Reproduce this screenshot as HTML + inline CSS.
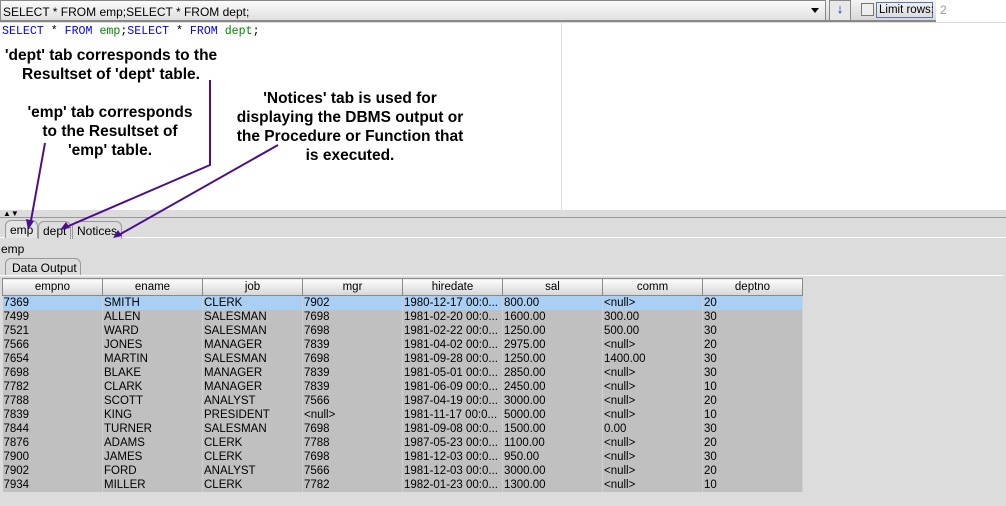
<!DOCTYPE html>
<html><head><style>
*{margin:0;padding:0;box-sizing:border-box}
body{width:1006px;height:506px;overflow:hidden;background:#dcdcdc;font-family:"Liberation Sans",Arial,sans-serif;font-size:11px;position:relative;color:#000}
.abs{position:absolute;white-space:nowrap}
.top{left:0;top:0;width:1006px;height:22px;background:linear-gradient(#f4f4f4,#d8d8d8);border-bottom:2px solid #888}
.combo{left:0;top:0;width:826px;height:21px;border:1px solid #888;background:linear-gradient(#fbfbfb,#e0e0e0);padding:4px 2px;font-size:12px}
.ed{left:0;top:23px;width:1006px;height:187px;background:#fff}
.code{font-family:"Liberation Mono",monospace;font-size:11.6px;left:2px;top:25px}
.ann{font-family:"Liberation Sans",Arial,sans-serif;font-weight:bold;font-size:15.5px;line-height:19px;text-align:center}
.tab{height:18px;border:1px solid #999;border-bottom:none;border-radius:6px 6px 0 0;padding:2px 4px;font-size:12px;background:#dcdcdc}
table{border-collapse:collapse;position:absolute;left:2px;top:278px;table-layout:fixed;width:800px}
td{width:100px;height:14px;padding:0 1px;font-size:11.5px;line-height:14px;white-space:nowrap;overflow:hidden;border-right:1px solid #d0d0d0}
th{width:100px;height:17px;font-weight:normal;font-size:11.5px;background:linear-gradient(#fdfdfd,#d6d6d6);border:1px solid #8a8a8a}
tr.r td{background:#c0c0c0}
tr.s td{background:#a9cff5}
</style></head><body>
<div class="abs top"></div>
<div class="abs combo">SELECT * FROM emp;SELECT * FROM dept;<span style="position:absolute;right:6px;top:7px;border:4px solid transparent;border-top:5px solid #000"></span></div>
<div class="abs" style="left:829px;top:0;width:22px;height:21px;border:1px solid #888;background:#e8e8e8;color:#0020d0;text-align:center;font-weight:bold;font-size:13px">&#8595;</div>
<div class="abs" style="left:861px;top:3px;width:13px;height:13px;border:1px solid #777;background:#eee"></div>
<div class="abs" style="left:876px;top:2px;width:57px;height:16px;border:1px solid #5577aa;padding:1px 2px;font-size:11.5px;line-height:12px">Limit rows:</div>
<div class="abs" style="left:936px;top:0;width:70px;height:22px;background:#fff;color:#999;padding:3px 4px;font-size:12px">2</div>
<div class="abs ed"></div>
<div class="abs" style="left:561px;top:23px;width:1px;height:187px;background:#ddd"></div>
<div class="abs code"><span style="color:#00f">SELECT</span> * <span style="color:#00f">FROM</span> <span style="color:#080">emp</span>;<span style="color:#00f">SELECT</span> * <span style="color:#00f">FROM</span> <span style="color:#080">dept</span>;</div>
<div class="abs ann" style="left:0;top:46px;width:222px">'dept' tab corresponds to the<br>Resultset of 'dept' table.</div>
<div class="abs ann" style="left:10px;top:103px;width:200px">'emp' tab corresponds<br>to the Resultset of<br>'emp' table.</div>
<div class="abs ann" style="left:225px;top:89px;width:250px">'Notices' tab is used for<br>displaying the DBMS output or<br>the Procedure or Function that<br>is executed.</div>
<div class="abs" style="left:0;top:210px;width:1006px;height:8px;background:#dcdcdc;border-bottom:1px solid #999"></div>
<div class="abs" style="left:3px;top:211px;font-size:8px;line-height:6px">&#9650;&#9660;</div>
<div class="abs" style="left:0;top:237px;width:1006px;height:1px;background:#fff"></div>
<div class="abs tab" style="left:5px;top:220px;height:18px;background:#e4e4e4">emp</div>
<div class="abs tab" style="left:38px;top:221px">dept</div>
<div class="abs tab" style="left:72px;top:221px">Notices</div>
<div class="abs" style="left:1px;top:242px;font-size:12px">emp</div>
<div class="abs tab" style="left:5px;top:258px;width:76px;height:17px;padding:2px 6px">Data Output</div>
<div class="abs" style="left:0;top:275px;width:1003px;height:1px;background:#fff"></div>
<svg class="abs" style="left:0;top:0" width="1006" height="506">
<g stroke="#4b0e8f" stroke-width="2" fill="none"><path d="M45 143 L30 226"/><path d="M210 80 L210 165 L64 228"/><path d="M278 145 L117 236"/></g>
<g fill="#4b0e8f"><path d="M28 230 L26 219 L34 221Z"/><path d="M60 230 L66 222 L70 228Z"/><path d="M113 238 L118 230 L122 236Z"/></g>
</svg>
<table>
<tr><th>empno</th><th>ename</th><th>job</th><th>mgr</th><th>hiredate</th><th>sal</th><th>comm</th><th>deptno</th></tr>
<tr class="s"><td>7369</td><td>SMITH</td><td>CLERK</td><td>7902</td><td>1980-12-17 00:0...</td><td>800.00</td><td>&lt;null&gt;</td><td>20</td></tr>
<tr class="r"><td>7499</td><td>ALLEN</td><td>SALESMAN</td><td>7698</td><td>1981-02-20 00:0...</td><td>1600.00</td><td>300.00</td><td>30</td></tr>
<tr class="r"><td>7521</td><td>WARD</td><td>SALESMAN</td><td>7698</td><td>1981-02-22 00:0...</td><td>1250.00</td><td>500.00</td><td>30</td></tr>
<tr class="r"><td>7566</td><td>JONES</td><td>MANAGER</td><td>7839</td><td>1981-04-02 00:0...</td><td>2975.00</td><td>&lt;null&gt;</td><td>20</td></tr>
<tr class="r"><td>7654</td><td>MARTIN</td><td>SALESMAN</td><td>7698</td><td>1981-09-28 00:0...</td><td>1250.00</td><td>1400.00</td><td>30</td></tr>
<tr class="r"><td>7698</td><td>BLAKE</td><td>MANAGER</td><td>7839</td><td>1981-05-01 00:0...</td><td>2850.00</td><td>&lt;null&gt;</td><td>30</td></tr>
<tr class="r"><td>7782</td><td>CLARK</td><td>MANAGER</td><td>7839</td><td>1981-06-09 00:0...</td><td>2450.00</td><td>&lt;null&gt;</td><td>10</td></tr>
<tr class="r"><td>7788</td><td>SCOTT</td><td>ANALYST</td><td>7566</td><td>1987-04-19 00:0...</td><td>3000.00</td><td>&lt;null&gt;</td><td>20</td></tr>
<tr class="r"><td>7839</td><td>KING</td><td>PRESIDENT</td><td>&lt;null&gt;</td><td>1981-11-17 00:0...</td><td>5000.00</td><td>&lt;null&gt;</td><td>10</td></tr>
<tr class="r"><td>7844</td><td>TURNER</td><td>SALESMAN</td><td>7698</td><td>1981-09-08 00:0...</td><td>1500.00</td><td>0.00</td><td>30</td></tr>
<tr class="r"><td>7876</td><td>ADAMS</td><td>CLERK</td><td>7788</td><td>1987-05-23 00:0...</td><td>1100.00</td><td>&lt;null&gt;</td><td>20</td></tr>
<tr class="r"><td>7900</td><td>JAMES</td><td>CLERK</td><td>7698</td><td>1981-12-03 00:0...</td><td>950.00</td><td>&lt;null&gt;</td><td>30</td></tr>
<tr class="r"><td>7902</td><td>FORD</td><td>ANALYST</td><td>7566</td><td>1981-12-03 00:0...</td><td>3000.00</td><td>&lt;null&gt;</td><td>20</td></tr>
<tr class="r"><td>7934</td><td>MILLER</td><td>CLERK</td><td>7782</td><td>1982-01-23 00:0...</td><td>1300.00</td><td>&lt;null&gt;</td><td>10</td></tr>
</table>
</body></html>
